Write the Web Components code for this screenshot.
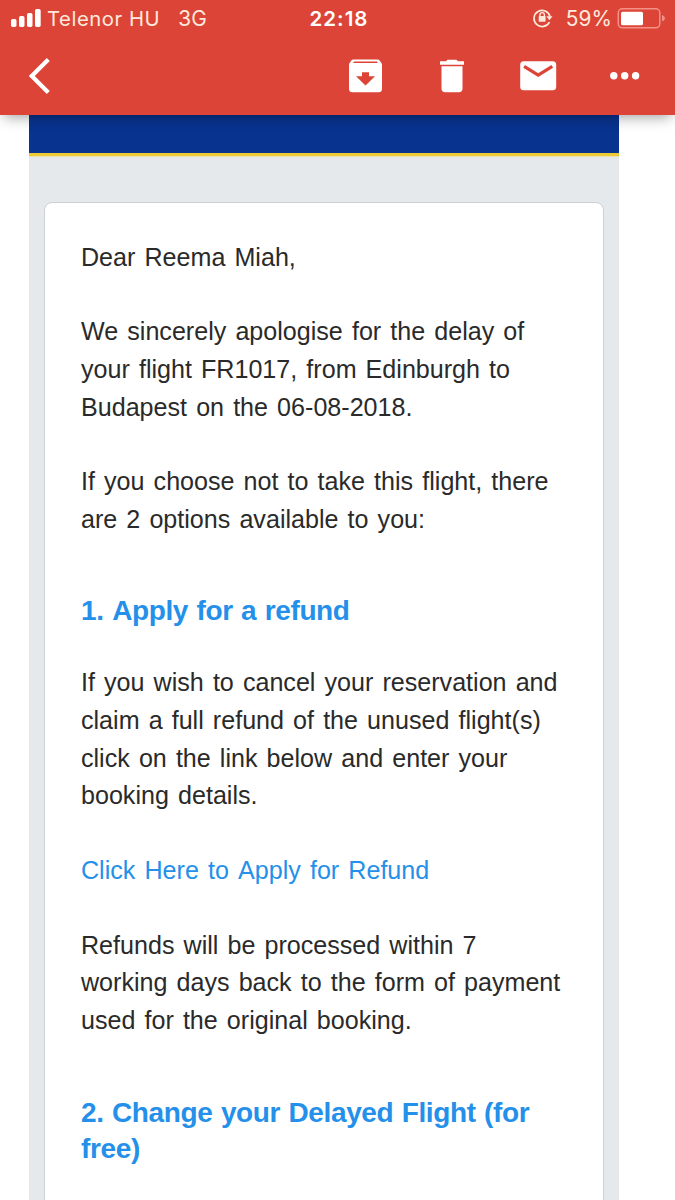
<!DOCTYPE html>
<html lang="en">
<head>
<meta charset="utf-8">
<title>Mail</title>
<style>
body { margin: 0; width: 675px; height: 1200px; overflow: hidden; background: #fff; }
.cap { margin-left: .1px; }
</style>
</head>
<body>
<mail-screen>
  <status-bar slot="top"></status-bar>
  <mail-toolbar slot="top"></mail-toolbar>
  <mail-message>
    <mail-text>Dear Reema Miah,</mail-text>
    <mail-text>We sincerely apologise for the delay of<br>your flight FR1017, from Edinburgh to<br>Budapest on the 06-08-2018.</mail-text>
    <mail-text>If you choose not to take this flight, there<br>are 2 options available to you:</mail-text>
    <mail-heading>1. <span class="cap">Apply for a refund</span></mail-heading>
    <mail-text>If you wish to cancel your reservation and<br>claim a full refund of the unused flight(s)<br>click on the link below and enter your<br>booking details.</mail-text>
    <mail-text link>Click Here to <span class="cap">Apply for Refund</span></mail-text>
    <mail-text>Refunds will be processed within 7<br>working days back to the form of payment<br>used for the original booking.</mail-text>
    <mail-heading>2. Change your Delayed Flight (for<br>free)</mail-heading>
  </mail-message>
</mail-screen>
<script>
const define = (name, html) => customElements.define(name, class extends HTMLElement {
  constructor() {
    super();
    this.attachShadow({ mode: 'open' }).innerHTML = html;
  }
});

define('mail-screen', `
<style>
:host { display: block; height: 1200px; overflow: hidden; }
header { position: relative; z-index: 1; height: 115px; background: #dc4437; box-shadow: 0 6px 13px -4px rgba(0,0,0,.38); }
</style>
<header><slot name="top"></slot></header>
<slot></slot>`);

define('status-bar', `
<style>
:host { display: grid; grid-template: 37px / 1fr auto 1fr; align-items: center; height: 37px; padding: 0 10px 0 11px; box-sizing: border-box; color: #ffe9dc; font: 20.3px/36px Inter, sans-serif; white-space: pre; }
div { display: flex; align-items: center; height: 37px; }
svg { display: block; flex: none; }
span { padding-top: 1px; }
.net { margin-left: 6px; letter-spacing: .55px; }
.gen { margin-left: 18px; font-size: 20.800px; letter-spacing: .3px; }
.time { color: #fff; font-weight: 600; font-size: 20.500px; letter-spacing: 1px; padding-left: 2px; }
.right { justify-content: flex-end; }
.pct { margin: 0 5px 0 13px; font-size: 20.800px; letter-spacing: .1px; }
</style>
<div><svg width="30" height="37" fill="#fff"><rect y="19" width="5.5" height="8" rx="1.7"/><rect x="8" y="16" width="5.5" height="11" rx="1.7"/><rect x="16" y="13" width="5.5" height="14" rx="1.7"/><rect x="24" y="9" width="5.7" height="18" rx="1.7"/></svg><span class="net">Telenor HU</span><span class="gen">3G</span></div>
<span class="time">22:18</span>
<div class="right"><svg width="20.500" height="37" fill="none"><path d="M17.400 22.100A8.100 8.100 0 1 1 18 16.500" stroke="#ffe9dc" stroke-width="1.7"/><path d="M14.300 16.200h6.200l-3.100 4z" fill="#ffe9dc"/><rect x="6.700" y="16" width="6.900" height="5.700" rx=".8" fill="#ffe9dc"/><path d="M7.900 16.500v-1.600a2.250 2.250 0 0 1 4.500 0V16.500" stroke="#ffe9dc" stroke-width="1.4"/></svg><span class="pct">59%</span><svg width="48" height="37" fill="none"><rect x="1.300" y="8.800" width="41.500" height="19" rx="4" stroke="#f39186" stroke-width="1.5"/><rect x="4" y="11.700" width="22" height="13.500" rx="1.500" fill="#fff"/><path d="M45 15q2.900 1 2.900 3.300t-2.900 3.300z" fill="#f39186"/></svg></div>`);

define('mail-toolbar', `
<style>
:host { display: flex; align-items: center; justify-content: space-between; height: 78px; padding: 0 35px 0 29px; box-sizing: border-box; }
svg { display: block; }
.actions { display: flex; align-items: center; }
.trash { margin-left: 57px; }
.mail { margin-left: 55px; }
.more { margin-left: 53px; }
</style>
<svg width="22" height="38" fill="none"><path d="M19.300 2.600 2.800 19 19.300 35.400" stroke="#fff" stroke-width="4.200"/></svg>
<div class="actions">
<svg width="33" height="34" fill="#fff"><path fill-rule="evenodd" d="M4.200.5h24.600q1 0 1.600.8l2 2.700q.6.8.6 1.700v24q0 3.500-3.500 3.500h-26Q0 33.200 0 29.700v-24Q0 4.800.6 4l2-2.700Q3.200.500 4.200.500zM5.200 2.500 4 4.100h25l-1.200-1.600zM13 13.200v4H7l9.500 9.300 9.500-9.300h-6v-4z"/></svg>
<svg class="trash" width="26" height="34" fill="#fff"><path d="M1 2.200h6L8.500.7h9L19 2.200h6v3.600H1zM2.500 7.300h21v22.200q0 3.700-3.700 3.700H6.200q-3.700 0-3.700-3.700z"/></svg>
<svg class="mail" width="37" height="30"><rect x=".2" y=".3" width="36" height="29" rx="3.5" fill="#fff"/><path d="M4.100 5.400 18.200 14.200 32.300 5.400" fill="none" stroke="#dc4437" stroke-width="3.200"/></svg>
<svg class="more" width="30" height="10" fill="#fff"><circle cx="3.800" cy="4.700" r="3.700"/><circle cx="14.700" cy="4.700" r="3.700"/><circle cx="25.600" cy="4.700" r="3.700"/></svg>
</div>`);

define('mail-message', `
<style>
:host { display: block; width: 590px; height: 1085px; margin-left: 29px; background: #e5e9ec; }
.banner { height: 38px; background: #08338f; border-bottom: 3px solid #eecb35; box-shadow: 0 1px #ebe1ac; }
article { box-sizing: border-box; width: 560px; height: 1100px; margin: 46px 0 0 15px; padding: 36.200px 0 0 36px; background: #fff; border: 1px solid #cdd2d6; border-radius: 8px; }
</style>
<div class="banner"></div>
<article><slot></slot></article>`);

define('mail-text', `
<style>
:host { display: block; margin-bottom: 36.500px; color: #2a2a2a; font: 25.100px/37.750px "Liberation Sans", Arial, sans-serif; word-spacing: 2.120px; white-space: nowrap; }
:host([link]) { padding-top: .8px; color: #2590e9; }
</style>
<slot></slot>`);

define('mail-heading', `
<style>
:host { display: block; margin: 54.700px 0 34.800px; color: #2590e9; font: bold 28px/36px "Liberation Sans", Arial, sans-serif; letter-spacing: -.37px; word-spacing: 1px; white-space: nowrap; }
</style>
<slot></slot>`);
</script>
</body>
</html>
